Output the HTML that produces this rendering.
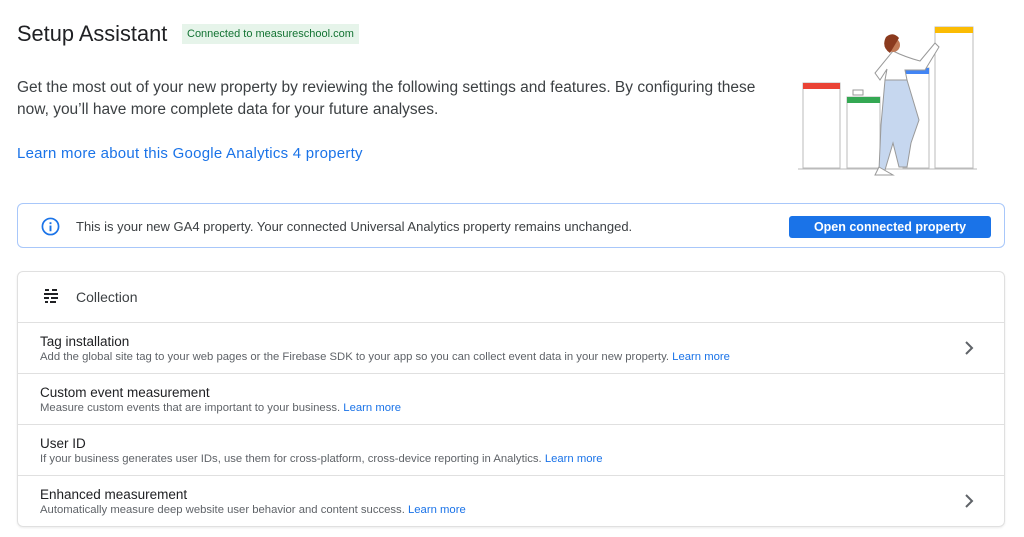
<!DOCTYPE html>
<html><head><style>
*{margin:0;padding:0;box-sizing:border-box}
body{width:1024px;height:537px;background:#fff;font-family:"Liberation Sans",sans-serif;color:#202124;position:relative;overflow:hidden}
.abs{position:absolute}
h1{position:absolute;left:17px;top:21px;font-size:21.8px;font-weight:normal;color:#202124}
.chip{position:absolute;left:182px;top:24px;height:20px;padding:0 5px;background:#e6f4ea;color:#137333;font-size:11px;line-height:20px}
.desc{position:absolute;left:17px;top:77px;font-size:15.5px;line-height:22px;color:#3c4043;width:770px}
.lm{position:absolute;left:17px;top:145px;font-size:15px;letter-spacing:0.25px;color:#1a73e8}
.banner{position:absolute;left:17px;top:203px;width:988px;height:45px;border:1px solid #a8c7fa;border-radius:6px}
.banner .t{position:absolute;left:58px;top:15px;font-size:13px;color:#3c4043}
.btn{position:absolute;left:771px;top:12px;width:202px;height:22px;background:#1a73e8;color:#fff;border-radius:3px;font-size:12.5px;font-weight:bold;text-align:center;line-height:22px}
.card{position:absolute;left:17px;top:271px;width:988px;height:256px;border:1px solid #e0e0e0;border-radius:6px;box-shadow:0 1px 2px rgba(0,0,0,.08)}
.hd{position:absolute;left:58px;top:17px;font-size:14px;color:#3c4043}
.row{position:absolute;left:0;width:986px;height:51px;border-top:1px solid #e0e0e0}
.row b{position:absolute;left:22px;top:11px;font-size:13.5px;font-weight:normal;color:#202124}
.row span{position:absolute;left:22px;top:28px;font-size:11.3px;color:#5f6368}
.row a{color:#1a73e8;text-decoration:none}
.chev{position:absolute;right:30px;top:18px}
</style></head><body>
<h1>Setup Assistant</h1>
<div class="chip">Connected to measureschool.com</div>
<div class="desc">Get the most out of your new property by reviewing the following settings and features. By configuring these now, you’ll have more complete data for your future analyses.</div>
<div class="lm">Learn more about this Google Analytics 4 property</div>
<svg class="abs" style="left:795px;top:25px" width="185" height="155" viewBox="0 0 185 155">
<g fill="none" stroke="#bbb" stroke-width="1">
<rect x="8" y="58" width="37" height="85"/><rect x="52" y="72" width="33" height="71"/><rect x="108" y="43" width="26" height="100"/><rect x="140" y="2" width="38" height="141"/>
<line x1="3" y1="144" x2="182" y2="144"/></g>
<rect x="8" y="58" width="37" height="6" fill="#ea4335"/>
<rect x="52" y="72" width="33" height="6" fill="#34a853"/>
<rect x="108" y="43" width="26" height="6" fill="#4285f4"/>
<rect x="140" y="2" width="38" height="6" fill="#fbbc04"/>
<path d="M98 26 Q110 32 125 36 L140 18 L144 22 L130 45 L110 45 L112 55 L90 55 L92 44 L85 55 L80 48 Z" fill="#fff" stroke="#999"/>
<path d="M90 55 L112 55 L124 95 L116 118 L112 142 L104 142 L98 118 L90 145 L84 145 L86 100Z" fill="#c6d7ef" stroke="#999"/>
<circle cx="98" cy="20" r="7" fill="#c27a56"/><path d="M91 12 Q98 6 104 13 L95 28 Q86 22 91 12Z" fill="#8b3a1e"/>
<path d="M84 142 L98 150 L80 150Z" fill="#fff" stroke="#999"/>
<path d="M58 70 h10 v-5 h-10z" fill="#fff" stroke="#999"/>
</svg>
<div class="banner">
<svg class="abs" style="left:23px;top:13px" width="19" height="19" viewBox="0 0 20 20"><circle cx="10" cy="10" r="8.5" fill="none" stroke="#1a73e8" stroke-width="1.8"/><rect x="9" y="9" width="2" height="6" fill="#1a73e8"/><rect x="9" y="5.5" width="2" height="2" fill="#1a73e8"/></svg>
<div class="t">This is your new GA4 property. Your connected Universal Analytics property remains unchanged.</div>
<div class="btn">Open connected property</div>
</div>
<div class="card">
<svg class="abs" style="left:25px;top:16px" width="16" height="16" viewBox="0 0 16 16" fill="#202124"><rect x="2" y="1" width="4" height="2"/><rect x="9" y="1" width="5" height="2"/><rect x="1" y="5" width="14" height="2"/><rect x="1" y="9" width="5" height="2"/><rect x="8" y="9" width="7" height="2"/><rect x="2" y="13" width="3" height="2"/><rect x="7" y="13" width="6" height="2"/></svg>
<div class="hd">Collection</div>
<div class="row" style="top:50px"><b>Tag installation</b><span>Add the global site tag to your web pages or the Firebase SDK to your app so you can collect event data in your new property. <a>Learn more</a></span><svg class="chev" width="10" height="14" viewBox="0 0 10 14"><path d="M2 1l6 6-6 6" fill="none" stroke="#5f6368" stroke-width="2"/></svg></div>
<div class="row" style="top:101px"><b>Custom event measurement</b><span>Measure custom events that are important to your business. <a>Learn more</a></span></div>
<div class="row" style="top:152px"><b>User ID</b><span>If your business generates user IDs, use them for cross-platform, cross-device reporting in Analytics. <a>Learn more</a></span></div>
<div class="row" style="top:203px"><b>Enhanced measurement</b><span>Automatically measure deep website user behavior and content success. <a>Learn more</a></span><svg class="chev" width="10" height="14" viewBox="0 0 10 14"><path d="M2 1l6 6-6 6" fill="none" stroke="#5f6368" stroke-width="2"/></svg></div>
</div>
</body></html>
